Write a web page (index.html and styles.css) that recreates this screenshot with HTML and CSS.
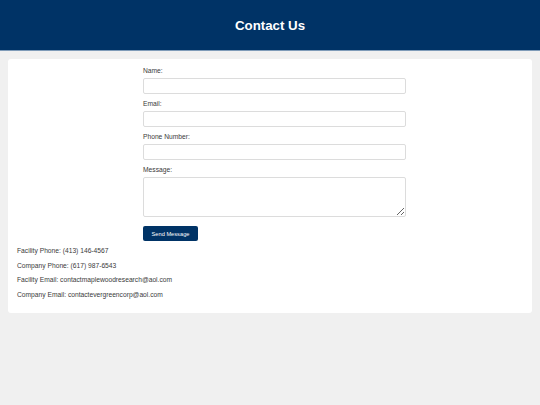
FILE: index.html
```html
<!DOCTYPE html>
<html>
<head>
<meta charset="utf-8">
<link rel="stylesheet" href="styles.css">
</head>
<body>
<header class="site-header">
  <h1 class="title">Contact Us</h1>
</header>
<main class="card">
  <form class="contact-form">
    <label class="field-label" for="name">Name:</label>
    <input class="field" id="name" type="text">
    <label class="field-label" for="email">Email:</label>
    <input class="field" id="email" type="email">
    <label class="field-label" for="phone">Phone Number:</label>
    <input class="field" id="phone" type="tel">
    <label class="field-label" for="message">Message:</label>
    <textarea class="field area" id="message"></textarea>
    <button class="send" type="button">Send Message</button>
  </form>
  <div class="info">
    <p>Facility Phone: (413) 146-4567</p>
    <p>Company Phone: (617) 987-6543</p>
    <p>Facility Email: contactmaplewoodresearch@aol.com</p>
    <p>Company Email: contactevergreencorp@aol.com</p>
  </div>
</main>
</body>
</html>
```
FILE: styles.css
```css
html, body {
  margin: 0;
  padding: 0;
}
body {
  background: #f0f0f0;
  font-family: "Liberation Sans", Arial, sans-serif;
  color: #333;
}
.site-header {
  background: #003366;
  height: 51px;
  display: flex;
  align-items: center;
  justify-content: center;
  border-bottom: 1px solid #7f9bb8;
  box-sizing: border-box;
}
.title {
  margin: 0;
  color: #fff;
  font-size: 13.3px;
  font-weight: bold;
}
.card {
  display: block;
  background: #fff;
  margin: 8px 8px;
  padding: 8px 9px 8px;
  border-radius: 3px;
  box-sizing: border-box;
}
.contact-form {
  width: 263px;
  margin: 0 auto 0 126px;
  display: flex;
  flex-direction: column;
  align-items: flex-start;
}
.field-label {
  font-size: 6.7px;
  line-height: 8px;
  margin-bottom: 3px;
  color: #3a3a3a;
}
.field {
  width: 263px;
  height: 16px;
  box-sizing: border-box;
  border: 1px solid #dcdcdc;
  border-radius: 2px;
  margin: 0 0 6px;
  padding: 2px 4px;
  font-size: 6.7px;
}
.area {
  height: 40px;
  resize: vertical;
  margin-bottom: 9px;
}
.send {
  background: #003366;
  color: #fff;
  border: none;
  border-radius: 2px;
  width: 55px;
  height: 15px;
  font-family: "Liberation Sans", Arial, sans-serif;
  font-size: 5.7px;
  padding: 0;
}
.info {
  margin-top: 5px;
}
.info p {
  margin: 0 0 4.7px;
  font-size: 6.7px;
  line-height: 10px;
  color: #3a3a3a;
}
```
